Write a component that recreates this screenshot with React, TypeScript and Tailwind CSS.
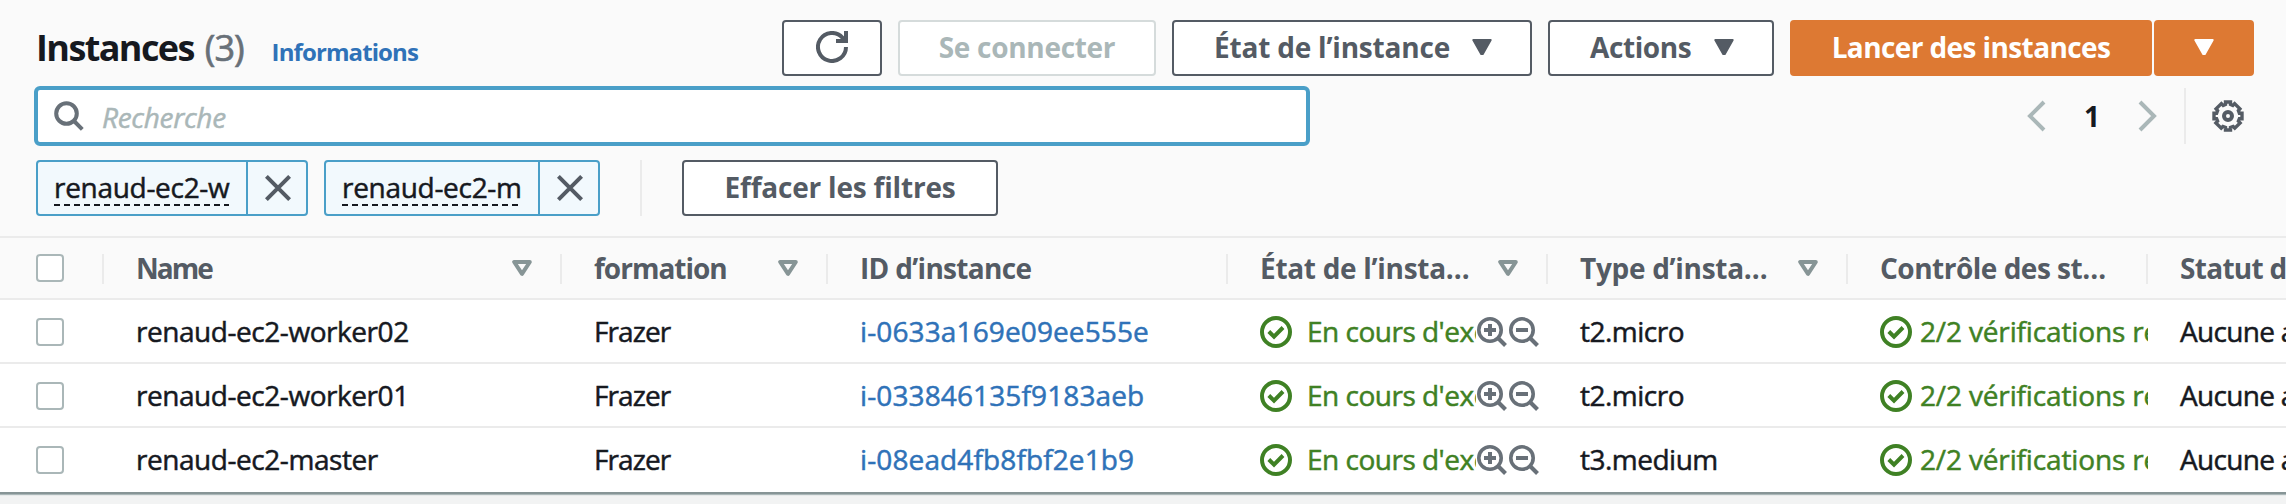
import type { ReactNode } from "react";

function Refresh() {
  return (
    <svg className="h-8 w-8 shrink-0" viewBox="0 0 32 32" fill="none" stroke="currentColor" strokeWidth="4">
      <path d="M30 16a14 14 0 1 1-3.600-9.400L28 8.500" />
      <path d="M30 0v10H20" />
    </svg>
  );
}

function Search() {
  return (
    <svg className="h-[30px] w-[30px] shrink-0" viewBox="0 0 30 30" fill="none" stroke="currentColor" strokeWidth="4">
      <circle cx="12.500" cy="12.500" r="10.300" />
      <path d="M19.500 19.500l8.800 8.800" />
    </svg>
  );
}

function Zoom({ plus }: { plus?: boolean }) {
  return (
    <svg className="h-[30px] w-[30px] shrink-0" viewBox="0 0 30 30" fill="none" stroke="currentColor" strokeWidth="3.600">
      <circle cx="13" cy="13" r="11.200" />
      <path d="M20.500 20.500l8 8" strokeWidth="4" />
      <path d="M7 13h12" strokeWidth="4" />
      {plus && <path d="M13 7v12" strokeWidth="4" />}
    </svg>
  );
}

function Check() {
  return (
    <svg className="h-8 w-8 shrink-0" viewBox="0 0 32 32" fill="none" stroke="currentColor" strokeWidth="4">
      <circle cx="16" cy="16" r="14" />
      <path d="M8.800 15.500l5.200 5.200 9-9.200" />
    </svg>
  );
}

function Close() {
  return (
    <svg className="ml-[2px] h-[26px] w-[26px]" viewBox="0 0 26 26" fill="none" stroke="currentColor" strokeWidth="4">
      <path d="M1.400 1.400l23.200 23.200M24.600 1.400L1.400 24.600" />
    </svg>
  );
}

function Caret() {
  return (
    <svg className="h-4 w-5 shrink-0" viewBox="0 0 20 16" fill="currentColor" stroke="currentColor" strokeWidth="2" strokeLinejoin="round">
      <path d="M1.300 1h17.400L10.800 15h-1.600z" />
    </svg>
  );
}

function Sort() {
  return (
    <svg className="h-4 w-5 shrink-0 text-[#879596]" viewBox="0 0 20 16" fill="none" stroke="currentColor" strokeWidth="4" strokeLinejoin="round">
      <path d="M2.200 2h15.600L10 13.800z" />
    </svg>
  );
}

function Chevron({ flip }: { flip?: boolean }) {
  return (
    <svg className={flip ? "h-8 w-5 rotate-180" : "h-8 w-5"} viewBox="0 0 20 32" fill="none" stroke="#aab7b8" strokeWidth="4">
      <path d="M18 2L4 16l14 14" />
    </svg>
  );
}

function Gear() {
  return (
    <svg className="h-8 w-8" viewBox="0 0 32 32" fill="none" stroke="currentColor" strokeWidth="4">
      <path d="M13.500 2h5v2.400l2.300 1 1.800-1.800 5.300 5.300-1.500 1.700 1 2.700H30v5.400h-2.600l-1 2.500 1.700 1.700-5.300 5.300-1.700-1.700-2.600 1V30h-5v-2.500l-2.600-1-1.700 1.700-5.300-5.300 1.700-1.700-1-2.500H2v-5.400h2.600l1-2.700-1.500-1.700 5.300-5.300 1.800 1.800 2.300-1z" strokeWidth="3.400" />
      <circle cx="16" cy="16" r="4" />
    </svg>
  );
}

const button = "flex h-14 items-center rounded border-2 pb-[2px] text-[28px] font-bold whitespace-nowrap";

function Button({ className, children }: { className: string; children: ReactNode }) {
  return <button className={`${button} ${className}`}>{children}</button>;
}

function Tag({ label, className, tracking }: { label: string; className: string; tracking: string }) {
  return (
    <div className={`flex h-14 rounded border-2 border-[#4a9fc8] bg-[#f2f9fd] ${className}`}>
      <div className="flex flex-1 items-start border-r-2 border-[#4a9fc8] pt-[6px] pl-4">
        <span className="flex flex-col">
          <span className={`h-9 text-[28px] leading-[38px] whitespace-nowrap text-[#16191f] [-webkit-text-stroke:0.5px] ${tracking}`}>{label}</span>
          <svg className="h-[2px] w-0 min-w-full" preserveAspectRatio="none">
            <line x1="0" x2="100%" y1="1" y2="1" stroke="#16191f" strokeWidth="2" strokeDasharray="6 4" />
          </svg>
        </span>
      </div>
      <button className="flex w-[58px] items-center justify-center text-[#545b64]">
        <Close />
      </button>
    </div>
  );
}

const grid = "grid grid-cols-[104px_458px_266px_400px_320px_300px_300px_300px]";

const columns = [
  { label: "Name", sort: true, tracking: "tracking-[-2px]" },
  { label: "formation", sort: true, tracking: "tracking-[-1px]" },
  { label: "ID d’instance", sort: false, tracking: "tracking-[-0.7px]" },
  { label: "État de l’insta…", sort: true, tracking: "tracking-[-0.3px]" },
  { label: "Type d’insta…", sort: true, tracking: "tracking-[-0.3px]" },
  { label: "Contrôle des st…", sort: false, tracking: "tracking-[-0.5px]" },
  { label: "Statut d’alarme", sort: false, tracking: "tracking-[-0.7px]" },
];

const rows = [
  { name: "renaud-ec2-worker02", id: "i-0633a169e09ee555e", type: "t2.micro" },
  { name: "renaud-ec2-worker01", id: "i-033846135f9183aeb", type: "t2.micro" },
  { name: "renaud-ec2-master", id: "i-08ead4fb8fbf2e1b9", type: "t3.medium" },
];

function Box() {
  return <span className="block h-7 w-7 rounded border-2 border-[#aab7b8] bg-white" />;
}

export default function App() {
  return (
    <div className="flex h-[504px] w-[2286px] flex-col overflow-hidden bg-[#f2f3f3] font-['Open_Sans','Noto_Sans',sans-serif] text-[#16191f]">
      <div className="flex h-[238px] flex-col border-b-2 border-[#ebebeb] bg-[#fafafa] pl-9">
        <header className="mt-5 flex h-14 items-center justify-between pr-8">
          <div className="flex items-baseline">
            <h1 className="text-[36px] leading-[56px] font-bold tracking-[-1.6px]">Instances</h1>
            <span className="ml-[11px] text-[36px] tracking-[-1px] text-[#687078] [-webkit-text-stroke:0.7px]">(3)</span>
            <a className="ml-[28px] text-[24px] font-bold tracking-[-0.9px] text-[#2f72b8]">Informations</a>
          </div>
          <div className="flex gap-4 text-[#545b64]">
            <Button className="w-[100px] justify-center border-[#545b64] bg-white pb-0"><Refresh /></Button>
            <Button className="w-[258px] justify-center border-[#d5dbdb] bg-white tracking-[-0.3px] text-[#aab7b8]">Se connecter</Button>
            <Button className="w-[360px] justify-between border-[#545b64] bg-white pr-[38px] pl-10 tracking-[-0.2px]">État de l’instance <Caret /></Button>
            <Button className="w-[226px] justify-between border-[#545b64] bg-white pr-[38px] pl-10 tracking-[-0.4px]">Actions <Caret /></Button>
            <div className="flex gap-[2px] text-white">
              <Button className="w-[362px] justify-center border-[#dd7933] bg-[#dd7933] tracking-[-0.6px]">Lancer des instances</Button>
              <Button className="w-[100px] justify-center border-[#dd7933] bg-[#dd7933] pb-0"><Caret /></Button>
            </div>
          </div>
        </header>

        <div className="mt-[10px] flex h-[60px] justify-between">
          <div className="-ml-[2px] flex w-[1276px] items-center rounded-md border-4 border-[#4a9fc8] bg-white pl-4 text-[#687078]">
            <Search />
            <span className="ml-[18px] pt-[2px] text-[28px] tracking-[-0.3px] text-[#aab7b8] italic [-webkit-text-stroke:0.5px]">Recherche</span>
          </div>
          <div className="flex items-center pr-[42px]">
            <Chevron />
            <span className="ml-[38px] w-[16px] text-center text-[28px] font-bold">1</span>
            <span className="ml-[38px] flex"><Chevron flip /></span>
            <span className="ml-[26px] h-14 w-[2px] bg-[#ebebeb]" />
            <span className="ml-[26px] text-[#545b64]"><Gear /></span>
          </div>
        </div>

        <div className="mt-[14px] flex h-14">
          <Tag label="renaud-ec2-w" className="w-[272px]" tracking="tracking-[-0.3px]" />
          <Tag label="renaud-ec2-m" className="ml-4 w-[276px]" tracking="tracking-[-0.3px]" />
          <span className="ml-10 w-[2px] bg-[#ebebeb]" />
          <Button className="ml-10 w-[316px] justify-center border-[#545b64] bg-white tracking-[-0.2px] text-[#545b64]">Effacer les filtres</Button>
        </div>
      </div>

      <div className={`${grid} h-[62px] shrink-0 border-b-2 border-[#ebebeb] bg-[#fafafa] pt-4`}>
        <div className="h-[30px] border-r-2 border-[#ebebeb] pl-9"><Box /></div>
        {columns.map((c) => (
          <div key={c.label} className="flex h-[30px] items-center justify-between border-r-2 border-[#ebebeb] pr-7 pl-8 text-[#545b64]">
            <span className={`-mt-[2px] text-[28px] leading-[30px] font-bold whitespace-nowrap ${c.tracking}`}>{c.label}</span>
            {c.sort && <span className="-mt-[2px]"><Sort /></span>}
          </div>
        ))}
      </div>

      <div className="border-b-2 border-[#879596] bg-white shadow-[0_1px_1px_#aab7b8]">
        {rows.map((r) => (
          <div key={r.name} className={`${grid} h-16 items-center border-b-2 border-[#ebebeb] pt-[2px] text-[28px] leading-[38px] whitespace-nowrap [-webkit-text-stroke:0.5px] last:border-transparent`}>
            <div className="pl-9"><Box /></div>
            <div className="-mt-[2px] pl-8 tracking-[-0.45px]">{r.name}</div>
            <div className="-mt-[2px] pl-8 tracking-[-0.9px]">Frazer</div>
            <div className="-mt-[2px] pl-8 tracking-[0.12px] text-[#2f72b8]">{r.id}</div>
            <div className="flex items-center pl-8 text-[#3f8124]">
              <Check />
              <span className="-mt-[2px] ml-[15px] w-[169px] overflow-hidden tracking-[-0.5px]">En cours d'exécution</span>
              <span className="ml-[1px] flex gap-[2px] text-[#687078]"><Zoom plus /><Zoom /></span>
            </div>
            <div className="-mt-[2px] pl-8 tracking-[-0.5px]">{r.type}</div>
            <div className="flex items-center pl-8 text-[#3f8124]">
              <Check />
              <span className="-mt-[2px] ml-2 flex-1 overflow-hidden tracking-[-0.15px]">2/2 vérifications réussies</span>
            </div>
            <div className="-mt-[2px] pl-8 tracking-[-0.7px]">Aucune alarme</div>
          </div>
        ))}
      </div>
    </div>
  );
}
